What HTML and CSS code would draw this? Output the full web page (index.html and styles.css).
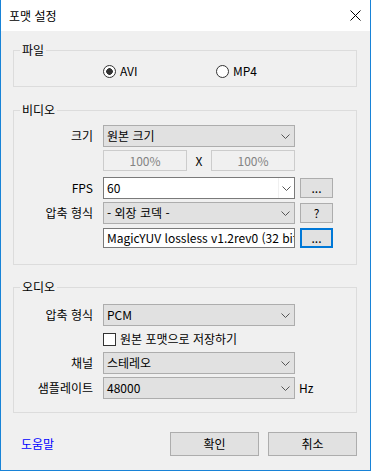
FILE: index.html
```html
<!DOCTYPE html>
<html lang="ko">
<head>
  <meta charset="UTF-8">
  <title>포맷 설정</title>
  <link rel="stylesheet" href="styles.css">
</head>
<body>
<div class="dialog">
  <div class="titlebar">
    <span class="title">포맷 설정</span>
    <svg class="close" width="11" height="11" viewBox="0 0 11 11">
      <path d="M0.5 0.5 L10.5 10.5 M10.5 0.5 L0.5 10.5" stroke="#000" stroke-width="1" fill="none"/>
    </svg>
  </div>

  <div class="content">
    <!--파일-->
    <fieldset class="group group-file">
      <legend>파일</legend>
      <div class="radios">
        <label class="radio checked"><span class="dot"></span>AVI</label>
        <label class="radio"><span class="dot"></span>MP4</label>
      </div>
    </fieldset>

    <!--비디오-->
    <fieldset class="group group-video">
      <legend>비디오</legend>
      <div class="row row-size">
        <span class="label">크기</span>
        <div class="combo"><span class="text">원본 크기</span><svg class="chev" width="9" height="5" viewBox="0 0 9 5"><path d="M0.5 0.5 L4.5 4.5 L8.5 0.5" stroke="#555" fill="none"/></svg></div>
      </div>
      <div class="row row-scale">
        <span class="label"></span>
        <div class="edit disabled">100%</div>
        <span class="times">X</span>
        <div class="edit disabled">100%</div>
      </div>
      <div class="row row-fps">
        <span class="label">FPS</span>
        <div class="combo editable"><span class="text">60</span><span class="drop"><svg class="chev" width="9" height="5" viewBox="0 0 9 5"><path d="M0.5 0.5 L4.5 4.5 L8.5 0.5" stroke="#555" fill="none"/></svg></span></div>
        <button class="btn-small">...</button>
      </div>
      <div class="row row-codec">
        <span class="label">압축 형식</span>
        <div class="combo"><span class="text">- 외장 코덱 -</span><svg class="chev" width="9" height="5" viewBox="0 0 9 5"><path d="M0.5 0.5 L4.5 4.5 L8.5 0.5" stroke="#555" fill="none"/></svg></div>
        <button class="btn-small">?</button>
      </div>
      <div class="row row-codec-name">
        <span class="label"></span>
        <div class="edit codec-name">MagicYUV lossless v1.2rev0 (32 bit)</div>
        <button class="btn-small focused">...</button>
      </div>
    </fieldset>

    <!--오디오-->
    <fieldset class="group group-audio">
      <legend>오디오</legend>
      <div class="row row-acodec">
        <span class="label">압축 형식</span>
        <div class="combo"><span class="text">PCM</span><svg class="chev" width="9" height="5" viewBox="0 0 9 5"><path d="M0.5 0.5 L4.5 4.5 L8.5 0.5" stroke="#555" fill="none"/></svg></div>
      </div>
      <div class="row row-check">
        <span class="label"></span>
        <label class="checkbox"><span class="box"></span>원본 포맷으로 저장하기</label>
      </div>
      <div class="row row-channel">
        <span class="label">채널</span>
        <div class="combo"><span class="text">스테레오</span><svg class="chev" width="9" height="5" viewBox="0 0 9 5"><path d="M0.5 0.5 L4.5 4.5 L8.5 0.5" stroke="#555" fill="none"/></svg></div>
      </div>
      <div class="row row-rate">
        <span class="label">샘플레이트</span>
        <div class="combo"><span class="text">48000</span><svg class="chev" width="9" height="5" viewBox="0 0 9 5"><path d="M0.5 0.5 L4.5 4.5 L8.5 0.5" stroke="#555" fill="none"/></svg></div>
        <span class="unit">Hz</span>
      </div>
    </fieldset>
  </div>

  <div class="footer">
    <a href="#" class="help">도움말</a>
    <div class="buttons">
      <button class="btn">확인</button>
      <button class="btn">취소</button>
    </div>
  </div>
</div>
</body>
</html>
```

FILE: styles.css
```css
* {
  margin: 0;
  padding: 0;
  box-sizing: border-box;
}

body {
  font-family: "Noto Sans CJK KR", "Noto Sans", sans-serif;
  font-size: 12px;
  line-height: 16px;
  color: #000;
  background: #fff;
}

button {
  font: inherit;
  color: #000;
}

.dialog {
  width: 371px;
  height: 471px;
  border: 1px solid #1883d7;
  border-top: none;
  background: #f0f0f0;
}

/* 제목 표시줄 */
.titlebar {
  height: 31px;
  background: #fff;
  display: flex;
  align-items: center;
  justify-content: space-between;
  padding: 0 9px 0 8px;
}

.content {
  padding: 11px 13px 0 12px;
}

.group {
  border: 1px solid #dcdcdc;
  min-width: 0;
}

.group legend {
  margin-left: 6px;
  padding: 0 2px;
  line-height: 16px;
}

.group-video,
.group-audio {
  margin-top: 15px;
}

.group-audio {
  margin-top: 14px;
}

.group-video {
  padding-bottom: 16px;
}

.group-audio {
  padding-bottom: 13px;
}

/* 라디오 */
.radios {
  display: flex;
  align-items: center;
  height: 26px;
  margin-bottom: 2px;
  padding-left: 89px;
}

.radio {
  display: flex;
  align-items: center;
}

.radio:first-child {
  width: 113px;
}

.radio .dot {
  width: 13px;
  height: 13px;
  margin-right: 4px;
  border: 1px solid #333;
  border-radius: 50%;
  background: #fff;
}

.radio.checked .dot {
  background: radial-gradient(circle, #333 0 3px, #fff 3.6px);
}

/* 행 */
.row {
  display: flex;
  align-items: center;
}

.row .label {
  width: 79px;
  margin-right: 10px;
  text-align: right;
  flex-shrink: 0;
}

.row-size { margin-top: 7px; }
.row-scale { margin-top: 3px; }
.row-fps { margin-top: 6px; }
.row-codec { margin-top: 3px; }
.row-codec-name { margin-top: 4px; }

.row-acodec { margin-top: 9px; }
.row-check { height: 26px; }
.row-rate { margin-top: 3px; }

.combo {
  width: 192px;
  height: 22px;
  display: flex;
  align-items: center;
  padding-left: 3px;
  border: 1px solid #adadad;
  background: #e1e1e1;
  flex-shrink: 0;
}

.combo .text {
  flex: 1;
  white-space: nowrap;
}

.combo .chev {
  margin-right: 4px;
  display: block;
}

.combo.editable {
  border-color: #7a7a7a;
  background: #fff;
}

.combo.editable .drop {
  height: 100%;
  width: 16px;
  display: flex;
  align-items: center;
  border-left: 1px solid #f0f0f0;
}

.combo.editable .drop .chev {
  margin: 0 0 0 3px;
}

.edit {
  height: 21px;
  padding: 0 3px;
  border: 1px solid #7a7a7a;
  background: #fff;
  white-space: nowrap;
  overflow: hidden;
  display: flex;
  align-items: center;
  flex-shrink: 0;
}

.edit.disabled {
  width: 84px;
  justify-content: center;
  border-color: #cccccc;
  background: #f0f0f0;
  color: #838383;
}

.times {
  width: 24px;
  text-align: center;
}

.codec-name {
  width: 192px;
  height: 20px;
}

.btn-small {
  width: 33px;
  height: 20px;
  margin-left: 5px;
  border: 1px solid #adadad;
  background: #e1e1e1;
  flex-shrink: 0;
}

.btn-small.focused {
  border: 2px solid #0078d7;
}

.checkbox {
  display: flex;
  align-items: center;
}

.checkbox .box {
  width: 13px;
  height: 13px;
  margin-right: 4px;
  border: 1px solid #333;
  background: #fff;
}

.unit {
  margin-left: 4px;
}

/* 하단 */
.footer {
  display: flex;
  align-items: center;
  padding: 19px 13px 0 20px;
}

.help {
  color: #0000ff;
  text-decoration: none;
}

.buttons {
  margin-left: auto;
  display: flex;
  gap: 9px;
}

.btn {
  width: 89px;
  height: 24px;
  border: 1px solid #adadad;
  background: #e1e1e1;
}
```
